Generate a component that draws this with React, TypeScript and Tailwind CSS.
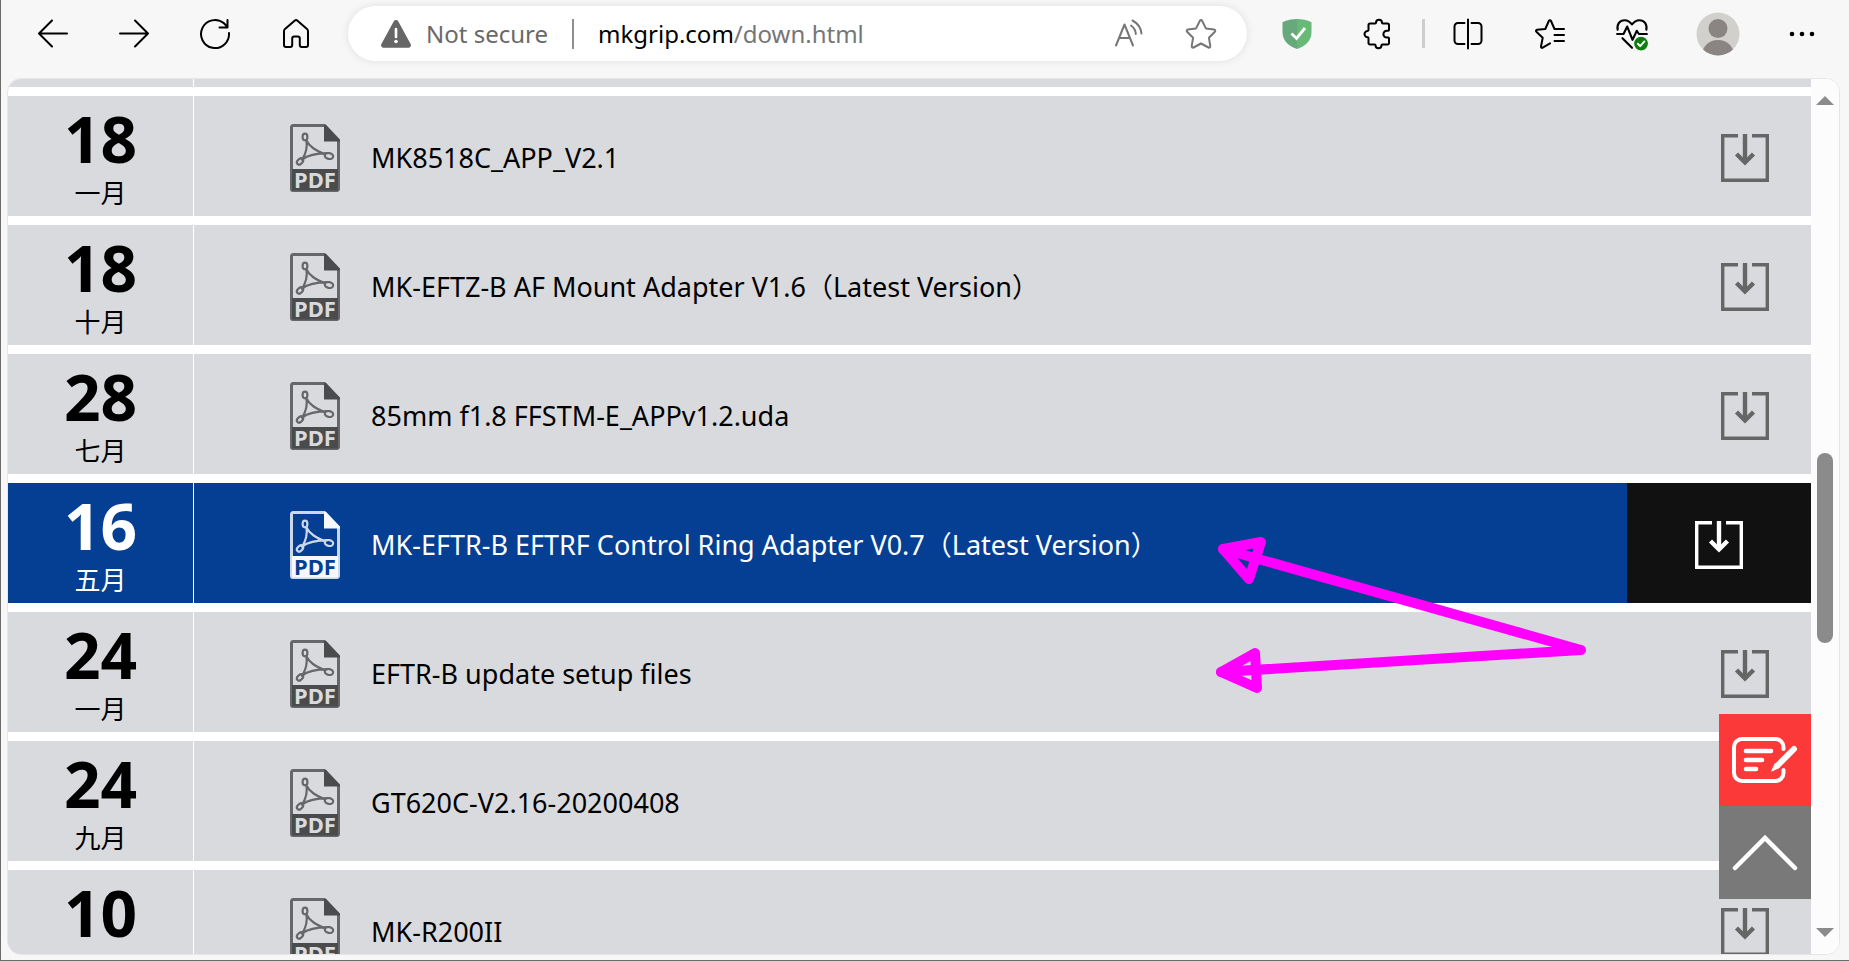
import type { ReactNode } from "react";

type Download = {
  day: string;
  month?: string;
  title: string;
  active?: boolean;
};

const downloads: Download[] = [
  { day: "18", month: "一月", title: "MK8518C_APP_V2.1" },
  { day: "18", month: "十月", title: "MK-EFTZ-B AF Mount Adapter V1.6（Latest Version）" },
  { day: "28", month: "七月", title: "85mm f1.8 FFSTM-E_APPv1.2.uda" },
  { day: "16", month: "五月", title: "MK-EFTR-B EFTRF Control Ring Adapter V0.7（Latest Version）", active: true },
  { day: "24", month: "一月", title: "EFTR-B update setup files" },
  { day: "24", month: "九月", title: "GT620C-V2.16-20200408" },
  { day: "10", title: "MK-R200II" },
];

function ToolButton({ label, children }: { label: string; children: ReactNode }) {
  return (
    <button type="button" aria-label={label} className="flex size-11 shrink-0 items-center justify-center text-black">
      {children}
    </button>
  );
}

function Icon({ children, size = 32 }: { children: ReactNode; size?: number }) {
  return (
    <svg
      width={size}
      height={size}
      viewBox="0 0 32 32"
      fill="none"
      stroke="currentColor"
      strokeWidth="2"
      strokeLinecap="round"
      strokeLinejoin="round"
      aria-hidden="true"
    >
      {children}
    </svg>
  );
}

function Toolbar() {
  return (
    <header className="flex h-[78px] shrink-0 items-start bg-[#f7f7f7] pt-[6px] pr-[25px] pl-[30px]">
      <nav className="flex h-[55px] items-center gap-[37px]">
        <ToolButton label="Back">
          <Icon>
            <path d="M30 15.500H2M15 2.500L2 15.500l13 13" />
          </Icon>
        </ToolButton>
        <ToolButton label="Forward">
          <Icon>
            <path d="M2 15.500h28M17 2.500l13 13-13 13" />
          </Icon>
        </ToolButton>
        <ToolButton label="Refresh">
          <Icon>
            <path d="M30 15a14 14 0 1 1-5-9.700L28.500 9M28.500 2v7.500h-8" />
          </Icon>
        </ToolButton>
        <ToolButton label="Home">
          <Icon>
            <path d="M4 13.200c0-.9.4-1.700 1-2.300L14.600 2.700a2.200 2.200 0 0 1 2.900 0L27 10.900c.6.6 1 1.400 1 2.300V27a2 2 0 0 1-2 2h-4.200a2 2 0 0 1-2-2v-6.500a2 2 0 0 0-2-2h-3.600a2 2 0 0 0-2 2V27a2 2 0 0 1-2 2H6a2 2 0 0 1-2-2z" />
          </Icon>
        </ToolButton>
      </nav>

      <div className="ml-[30px] flex h-[55px] min-w-0 flex-1 items-center rounded-full bg-white pr-6 pl-8 font-['Noto_Sans','Open_Sans',sans-serif] text-2xl shadow-[0_0_8px_rgba(0,0,0,0.10)]">
        <svg width="32" height="30" viewBox="0 0 32 30" className="shrink-0" aria-hidden="true">
          <path d="M13.800 2.300a2.500 2.500 0 0 1 4.400 0L30.600 25a2.500 2.500 0 0 1-2.200 3.700H3.600A2.500 2.500 0 0 1 1.400 25z" fill="#666" />
          <path d="M16 10v8" stroke="#fff" strokeWidth="2.600" strokeLinecap="round" />
          <circle cx="16" cy="22.500" r="1.800" fill="#fff" />
        </svg>
        <span className="ml-[14px] whitespace-nowrap text-[#696969]">Not secure</span>
        <span className="mx-6 h-[30px] w-[2px] shrink-0 bg-[#8f8f8f]" />
        <a href="#" className="min-w-0 flex-1 truncate text-[#767676]">
          <span className="text-black">mkgrip.com</span>/down.html
        </a>
        <div className="flex gap-7 text-[#767676]">
          <button type="button" aria-label="Read aloud" className="flex size-11 items-center justify-center">
            <Icon>
              <path d="M3 27.500L11.500 6.500 20 27.500M6 20h11M18 7.500c2.800 2 4.600 5 4.800 8.500M19.500 2.500c5 2.700 8.500 7.500 9 13" />
            </Icon>
          </button>
          <button type="button" aria-label="Add to favorites" className="flex size-11 items-center justify-center">
            <Icon>
              <path d="M14.900 2.700c.5-.9 1.700-.9 2.200 0l3.800 7.700 8.300 1.200c1 .1 1.400 1.400.7 2.100l-6 6 1.400 8.500c.2 1-.9 1.700-1.800 1.300L16 25.500l-7.500 4c-.9.400-2-.300-1.800-1.300l1.400-8.500-6-6c-.7-.7-.3-2 .7-2.100l8.300-1.200z" />
            </Icon>
          </button>
        </div>
      </div>

      <div className="ml-7 flex h-[55px] shrink-0 items-center">
        <ToolButton label="Ad blocker">
          <svg width="32" height="32" viewBox="0 0 32 32" aria-hidden="true">
            <path d="M16 1c5 0 10 1 14.500 3.200v10C30.500 22 25 28 16 31z" fill="#67b977" />
            <path d="M16 1C11 1 6 2 1.500 4.200v10C1.500 22 7 28 16 31z" fill="#68a97c" />
            <path d="M10.500 15.500l5 5 8.500-10.500" fill="none" stroke="#fff" strokeWidth="2.800" />
          </svg>
        </ToolButton>
        <div className="ml-[37px]">
          <ToolButton label="Extensions">
            <Icon>
              <path d="M8 5.500h5.200c.5 0 .8-.3.800-.8a3 3 0 0 1 6 0c0 .5.300.8.800.8H25.500a1.500 1.500 0 0 1 1.500 1.500v5a.8.8 0 0 1-.8.8h-1.400a3.400 3.400 0 0 0 0 6.800h1.400a.8.8 0 0 1 .8.8V25a1.500 1.500 0 0 1-1.500 1.500h-5.200c-.5 0-.8.3-.8.8a3 3 0 0 1-6 0c0-.5-.3-.8-.8-.8H8A1.500 1.500 0 0 1 6.500 25v-4.900c0-.5-.3-.8-.8-.8a3.200 3.200 0 0 1 0-6.400c.5 0 .8-.3.800-.8V7A1.500 1.500 0 0 1 8 5.500z" />
            </Icon>
          </ToolButton>
        </div>
        <span className="ml-[22px] h-[29px] w-[3px] bg-[#cfcfcf]" />
        <div className="ml-[21px] flex items-center gap-[38px]">
          <ToolButton label="Split screen">
            <Icon>
              <path d="M16 1.500v29M12.500 5H6a3.500 3.500 0 0 0-3.500 3.500v14A3.500 3.500 0 0 0 6 26h6.500M19.500 5H26a3.500 3.500 0 0 1 3.500 3.500v14A3.500 3.500 0 0 1 26 26h-6.500" />
            </Icon>
          </ToolButton>
          <ToolButton label="Favorites">
            <Icon>
              <path d="M30 11H20.500L17 3c-.4-1-1.800-1-2.200 0l-3.500 8-8.300.8c-1 .1-1.400 1.400-.6 2l6.300 6L7 28.500c-.2 1 .8 1.700 1.700 1.200l7.300-4.400M20.500 17H30M20.500 23H30" />
            </Icon>
          </ToolButton>
          <ToolButton label="Browser essentials">
            <Icon size={34}>
              <path d="M2.500 12C1.500 7 4.500 3 9 3c3 0 5.200 1.500 7 4 1.800-2.500 4-4 7-4 4.500 0 7.500 4 6.500 9M2 16h6l3.500-7 5 12.500 4-8.500 2 3H30M7 20l9 9" />
              <circle cx="24.500" cy="25" r="7" fill="#107c10" stroke="#f7f7f7" strokeWidth="1" />
              <path d="M21.500 25.200l2.200 2.200 4-4.400" stroke="#fff" strokeWidth="1.800" />
            </Icon>
          </ToolButton>
        </div>
        <div className="ml-[42px] flex items-center gap-10">
          <ToolButton label="Profile">
            <svg width="44" height="44" viewBox="0 0 44 44" aria-hidden="true">
              <clipPath id="avatar-clip">
                <circle cx="22" cy="22" r="21.500" />
              </clipPath>
              <g clipPath="url(#avatar-clip)">
                <rect width="44" height="44" fill="#d2d0cc" />
                <circle cx="22" cy="16.500" r="9.500" fill="#8a8582" />
                <path d="M6 44c0-9 6-16 16-16s16 7 16 16z" fill="#8a8582" />
              </g>
            </svg>
          </ToolButton>
          <ToolButton label="Settings and more">
            <svg width="28" height="28" viewBox="0 0 28 28" aria-hidden="true">
              <circle cx="4" cy="14" r="2.300" />
              <circle cx="14" cy="14" r="2.300" />
              <circle cx="24" cy="14" r="2.300" />
            </svg>
          </ToolButton>
        </div>
      </div>
    </header>
  );
}

function PdfIcon({ active }: { active?: boolean }) {
  const line = active ? "#ccd8ea" : "#666768";
  const dark = active ? "#f6f8fc" : "#4a4b4c";
  const label = active ? "#053f93" : "#d9dade";
  return (
    <svg width="50" height="68" viewBox="0 0 50 68" className="shrink-0" aria-hidden="true">
      <path d="M1.500 3A1.500 1.500 0 0 1 3 1.500h31.500L48.500 16v49a1.500 1.500 0 0 1-1.500 1.500H3A1.500 1.500 0 0 1 1.500 65z" fill="none" stroke={line} strokeWidth="3" />
      <path d="M34 1h2l14 15v1.500H34zM2 45h46v21.500H2z" fill={dark} />
      <g fill="none" stroke={line} strokeWidth="2.200" strokeLinecap="round">
        <ellipse cx="15" cy="13" rx="2.400" ry="3.300" />
        <ellipse cx="39" cy="32" rx="4.200" ry="2.900" transform="rotate(12 39 32)" />
        <ellipse cx="10" cy="37.500" rx="3.600" ry="2.400" transform="rotate(-45 10 37.500)" />
        <path d="M16.500 16.500c3 6.500 9 9.500 18.500 14M16.500 17c1 6-.5 12-4 18M12 35.500c5.500-4 13-6 25.500-6.300" />
      </g>
      <text x="25" y="63.500" textAnchor="middle" fill={label} className="font-['Noto_Sans',sans-serif] text-[22px] font-bold">
        PDF
      </text>
    </svg>
  );
}

function DownloadIcon() {
  return (
    <svg width="48" height="48" viewBox="0 0 48 48" fill="none" stroke="currentColor" aria-hidden="true">
      <path d="M17 1.700H1.700v44.600h44.600V1.700H31" strokeWidth="3.400" />
      <path d="M24 0v28" strokeWidth="4.400" />
      <path d="M15.500 20l8.500 8.500 8.500-8.500" strokeWidth="4.400" />
    </svg>
  );
}

function DownloadRow({ item }: { item: Download }) {
  return (
    <li className={item.active ? "flex h-[120px] shrink-0 bg-[#053f93] text-white" : "flex h-[120px] shrink-0 bg-[#d9dade] text-black"}>
      <time className="flex w-[186px] shrink-0 flex-col items-center border-r border-white pt-[9px]">
        <span className="text-[64px] leading-[68px] font-bold">{item.day}</span>
        {item.month && <span className="text-[26px] leading-10">{item.month}</span>}
      </time>
      <a href="#" className="flex min-w-0 flex-1 items-center pt-1 pl-24 text-[27px]">
        <PdfIcon active={item.active} />
        <span className="ml-[31px] truncate">{item.title}</span>
      </a>
      <button
        type="button"
        aria-label={`Download ${item.title}`}
        className={
          item.active
            ? "flex w-[184px] shrink-0 items-center justify-center bg-[#111] pt-1 text-white"
            : "flex w-[132px] shrink-0 items-center justify-center pt-1 text-[#666]"
        }
      >
        <DownloadIcon />
      </button>
    </li>
  );
}

function Scrollbar() {
  return (
    <div className="flex w-7 shrink-0 flex-col items-center bg-[#fcfcfc] py-[17px]">
      <svg width="18" height="9" viewBox="0 0 18 9" aria-hidden="true">
        <path d="M0 9l9-9 9 9z" fill="#8b8b8b" />
      </svg>
      <div className="mt-[348px] h-[190px] w-4 rounded-full bg-[#8b8b8b]" />
      <svg className="mt-auto" width="18" height="9" viewBox="0 0 18 9" aria-hidden="true">
        <path d="M0 0l9 9 9-9z" fill="#8b8b8b" />
      </svg>
    </div>
  );
}

function FloatingActions() {
  return (
    <div className="absolute right-7 bottom-[55px] flex w-[92px] flex-col">
      <button type="button" aria-label="Leave a message" className="flex h-[92px] items-center justify-center bg-[#fb3938] text-white">
        <svg width="66" height="46" viewBox="0 0 66 46" fill="none" stroke="currentColor" strokeLinecap="round" aria-hidden="true">
          <path d="M51.500 12V10a8 8 0 0 0-8-8H10a8 8 0 0 0-8 8v26a8 8 0 0 0 8 8h33.500a8 8 0 0 0 8-8v-3" strokeWidth="4" />
          <path d="M14 14h25M14 23h16M14 32h10" strokeWidth="4.600" />
          <path d="M62 12L46 28" strokeWidth="6" />
          <path d="M43.500 26.500l4 4-7.500 3.500z" fill="currentColor" strokeWidth="1" strokeLinejoin="round" />
        </svg>
      </button>
      <button type="button" aria-label="Back to top" className="flex h-[93px] items-center justify-center bg-[#797979] text-white">
        <svg width="66" height="38" viewBox="0 0 66 38" fill="none" stroke="currentColor" strokeLinecap="round" strokeWidth="4.500" aria-hidden="true">
          <path d="M3 34L33 4l30 30" />
        </svg>
      </button>
    </div>
  );
}

function ArrowAnnotation() {
  return (
    <svg
      className="pointer-events-none absolute top-[456px] right-[252px]"
      width="372"
      height="164"
      viewBox="0 0 372 164"
      fill="none"
      stroke="#ff00ff"
      strokeWidth="10"
      strokeLinecap="round"
      strokeLinejoin="round"
      aria-hidden="true"
    >
      <path d="M366 115L8 14M366 115L6 137" />
      <path d="M8 14l38-7-12 37z" />
      <path d="M6 137l34-19 2 35z" />
    </svg>
  );
}

export default function App() {
  return (
    <div className="flex h-screen flex-col overflow-hidden border-b border-l border-[#6b6b6b] bg-[#f7f7f7] font-['Noto_Sans','Noto_Sans_CJK_SC',sans-serif]">
      <Toolbar />
      <main className="relative mr-[9px] mb-[5px] ml-[6px] flex min-h-0 flex-1 overflow-hidden rounded-[14px] border border-[#e6e6e6] bg-white">
        <ul className="flex min-w-0 flex-1 flex-col gap-[9px] overflow-hidden">
          <li className="flex h-2 shrink-0 bg-[#d9dade]">
            <span className="w-[186px] border-r border-white" />
          </li>
          {downloads.map((item, index) => (
            <DownloadRow key={index} item={item} />
          ))}
        </ul>
        <Scrollbar />
        <FloatingActions />
        <ArrowAnnotation />
      </main>
    </div>
  );
}
